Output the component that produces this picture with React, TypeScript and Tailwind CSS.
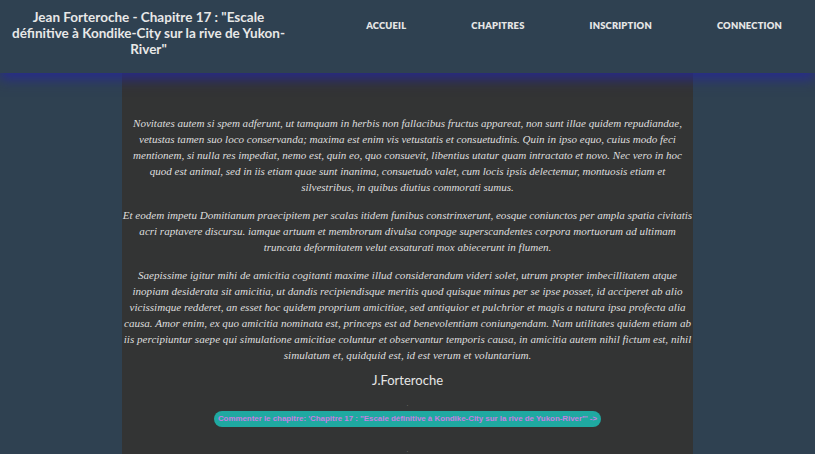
const navItems = ['Accueil', 'Chapitres', 'Inscription', 'Connection'];

const paragraphs = [
  {
    text: "Novitates autem si spem adferunt, ut tamquam in herbis non fallacibus fructus appareat, non sunt illae quidem repudiandae, vetustas tamen suo loco conservanda; maxima est enim vis vetustatis et consuetudinis. Quin in ipso equo, cuius modo feci mentionem, si nulla res impediat, nemo est, quin eo, quo consuevit, libentius utatur quam intractato et novo. Nec vero in hoc quod est animal, sed in iis etiam quae sunt inanima, consuetudo valet, cum locis ipsis delectemur, montuosis etiam et silvestribus, in quibus diutius commorati sumus.",
    tracking: 'tracking-[-0.03px]',
  },
  {
    text: "Et eodem impetu Domitianum praecipitem per scalas itidem funibus constrinxerunt, eosque coniunctos per ampla spatia civitatis acri raptavere discursu. iamque artuum et membrorum divulsa conpage superscandentes corpora mortuorum ad ultimam truncata deformitatem velut exsaturati mox abiecerunt in flumen.",
    tracking: 'tracking-[-0.03px]',
  },
  {
    text: "Saepissime igitur mihi de amicitia cogitanti maxime illud considerandum videri solet, utrum propter imbecillitatem atque inopiam desiderata sit amicitia, ut dandis recipiendisque meritis quod quisque minus per se ipse posset, id acciperet ab alio vicissimque redderet, an esset hoc quidem proprium amicitiae, sed antiquior et pulchrior et magis a natura ipsa profecta alia causa. Amor enim, ex quo amicitia nominata est, princeps est ad benevolentiam coniungendam. Nam utilitates quidem etiam ab iis percipiuntur saepe qui simulatione amicitiae coluntur et observantur temporis causa, in amicitia autem nihil fictum est, nihil simulatum et, quidquid est, id est verum et voluntarium.",
    tracking: '',
  },
];

export default function App() {
  return (
    <div className="min-h-[454px] bg-[#2f4151] font-['Lato','Open_Sans',sans-serif]">
      <header className="relative z-10 flex h-[73px] bg-[#2f4151] shadow-[0_6px_12px_rgba(38,40,150,0.85)]">
        <h1 className="w-[297px] px-[10px] pt-[9px] text-center text-[13.5px] font-bold leading-[16px] text-[#e8e8e8]">
          Jean Forteroche - Chapitre 17 : "Escale définitive à Kondike-City sur la rive de Yukon-River"
        </h1>
        <nav className="flex flex-1 justify-end gap-[65px] pr-[33px] pt-[19px]">
          {navItems.map((item) => (
            <a key={item} className="h-fit text-[9.4px] font-extrabold uppercase tracking-[0.2px] text-[#e6e6e6]">
              {item}
            </a>
          ))}
        </nav>
      </header>

      <main className="mx-auto min-h-[381px] w-[571px] bg-[#333434] pt-[42px] pb-2 text-center">
        <div className="flex flex-col gap-[12px]">
          {paragraphs.map((p, i) => (
            <p
              key={i}
              className={`font-['Liberation_Serif',serif] text-[11.1px] italic leading-[16px] text-[#dedede] ${p.tracking}`}
            >
              {p.text}
            </p>
          ))}
        </div>
        <p className="mt-[8px] text-[13px] text-[#e6e6e6]">J.Forteroche</p>
        <div className="mt-[10px] text-[6px] leading-[6px] text-[#888]">.</div>
        <div className="mt-[4px] flex justify-center">
          <button className="rounded-full bg-[#1fa9a1] px-[4px] py-[3px] font-['Liberation_Sans',sans-serif] text-[7.9px] font-bold leading-[10px] text-[#c77fe2]">
            Commenter le chapitre: 'Chapitre 17 : "Escale définitive à Kondike-City sur la rive de Yukon-River"' -&gt;
          </button>
        </div>
        <div className="mt-[20px] text-[6px] leading-[6px] text-[#888]">.</div>
      </main>
    </div>
  );
}
